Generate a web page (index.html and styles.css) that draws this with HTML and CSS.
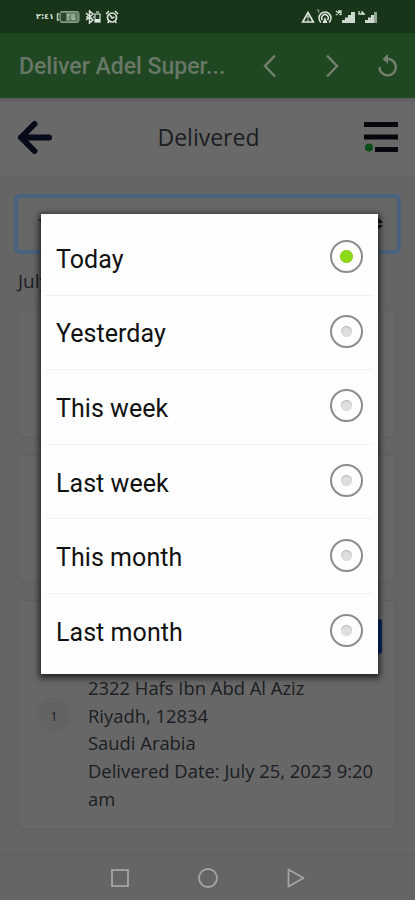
FILE: index.html
```html
<!DOCTYPE html>
<html lang="en">
<head>
<meta charset="utf-8">
<meta name="viewport" content="width=device-width, initial-scale=1">
<title>Delivered</title>
<link rel="stylesheet" href="styles.css">
</head>
<body>
<div class="status">
  <div class="status-left">
    <span class="clock">٢:٤١</span>
    <svg width="24" height="14" viewBox="0 0 24 14"><path d="M3 4H1.500V10H3" fill="none" stroke="#c3cec3" stroke-width="1.500"/><rect x="4" y="1.500" width="19" height="11" rx="2" fill="#668066" stroke="#8da18d"/><rect x="5" y="3" width="5" height="8" fill="#29482b"/><path d="M12 4v6M12 5h2M16 4v5h2M18 4v6" stroke="#c0cec0" fill="none"/></svg>
    <svg class="bt" width="17" height="14" viewBox="0 0 17 14"><path d="M1 3l7 7-3.500 3V1L8 4 1 10M1 7h2M8 7h1" fill="none" stroke="#dbe2db" stroke-width="1.500"/><path d="M10 4h5v8h-5zM11 2h3" fill="none" stroke="#aebfae" stroke-width="1.500"/><path d="M10 9h5v3h-5z" fill="#e1e7e1"/></svg>
    <svg class="alarm" width="14" height="14" viewBox="0 0 14 14"><circle cx="7" cy="7.500" r="4.500" fill="none" stroke="#dce3dc" stroke-width="1.700"/><path d="M1 4l3-3M13 4l-3-3M2.500 13l2-2M11.500 13l-2-2M5 5l2 3 2.500-1" fill="none" stroke="#dce3dc" stroke-width="1.500"/></svg>
  </div>
  <div class="status-right">
    <svg width="14" height="14" viewBox="0 0 14 14"><path d="M7 2.500L12.300 12H1.700z" fill="none" stroke="#dce3dc" stroke-width="1.700"/><path d="M7 5.500v3M7 9.500v1.500" stroke="#dce3dc" stroke-width="1.300"/></svg>
    <svg class="hotspot" width="18" height="16" viewBox="0 0 18 16"><path d="M5 13.500a6 6 0 1 1 8 0M6.500 11a3.300 3.300 0 1 1 5 0" fill="none" stroke="#dce3dc" stroke-width="1.500"/><path d="M9 8l2.500 6h-5z" fill="#dce3dc"/><path d="M1 1l2 0-.5 3" fill="none" stroke="#92a392"/></svg>
    <svg class="signal" width="22" height="15" viewBox="0 0 22 15"><path d="M1 2l5 4M1 6l5-4M3 2h3v4" fill="none" stroke="#cfd9cf" stroke-width="1.300"/><path d="M7 11h3v3H7zM10 8.500h3V14h-3zM13 6h3v8h-3zM16 3h4v11h-4z" fill="#cfd8cf"/></svg>
    <svg class="signal" width="22" height="15" viewBox="0 0 22 15"><path d="M1 2v3h3V2M5 3v3M4 5h3" fill="none" stroke="#cfd9cf" stroke-width="1.300"/><path d="M7 11h3v3H7zM10 8.500h3V14h-3zM13 6h3v8h-3z" fill="#cfd8cf"/><path d="M16 3h3v11h-3z" fill="#91a391"/></svg>
  </div>
</div>
<header class="appbar">
  <div class="app-title">Deliver Adel Super...</div>
  <svg class="nav-prev" width="18" height="26" viewBox="0 0 18 26"><path d="M14 2.500L4 13l10 10.500" fill="none" stroke="#74806f" stroke-width="2.500"/></svg>
  <svg class="nav-next" width="18" height="26" viewBox="0 0 18 26"><path d="M4 2.500L14 13 4 23.500" fill="none" stroke="#74806f" stroke-width="2.500"/></svg>
  <svg class="reload" width="22" height="26" viewBox="0 0 22 26"><path d="M8 6h3.500a8.200 8.200 0 1 1-9 8" fill="none" stroke="#74806f" stroke-width="2.400"/><path d="M11 1v10L5.500 6z" fill="#74806f"/></svg>
</header>
<div class="pagebar">
  <svg width="38" height="38" viewBox="0 0 38 38"><path d="M33 19.500H5M18.500 6L5 19.500 18.500 33" fill="none" stroke="#070a18" stroke-width="6" stroke-linecap="round" stroke-linejoin="round"/></svg>
  <h1>Delivered</h1>
  <svg width="36" height="34" viewBox="0 0 36 34"><path d="M1 4.500h34M1 17h34M12 29.500h23" stroke="#06070d" stroke-width="4.800"/><circle cx="6" cy="27.500" r="4" fill="#0b4f18"/></svg>
</div>
<main>
  <div class="select">
    <svg width="4" height="12" viewBox="0 0 4 12"><path d="M0 1h3v4z" fill="#303236"/></svg>
    <svg width="8" height="12" viewBox="0 0 8 12"><path d="M4 0l4 5H0zM4 11L8 7H0z" fill="#101216"/></svg>
  </div>
  <div class="date">July</div>
  <div class="card card-a"></div>
  <div class="card card-b"></div>
  <div class="card card-c">
    <div class="number">1</div>
    <div class="body">
      <div class="tagrow"><span class="tag"></span></div>
      <p>2322 Hafs Ibn Abd Al Aziz<br>Riyadh, 12834<br>Saudi Arabia<br>Delivered Date: July 25, 2023 9:20<br>am</p>
    </div>
  </div>
</main>
<nav class="sysnav">
  <svg width="20" height="20" viewBox="0 0 20 20"><rect x="2" y="2" width="16" height="16" fill="none" stroke="#a5a5a5" stroke-width="1.800"/></svg>
  <svg width="22" height="22" viewBox="0 0 22 22"><circle cx="11" cy="11" r="9" fill="none" stroke="#a5a5a5" stroke-width="1.800"/></svg>
  <svg width="20" height="22" viewBox="0 0 20 22"><path d="M2.500 2.500v17L17.500 11z" fill="none" stroke="#a5a5a5" stroke-width="1.800" stroke-linejoin="round"/></svg>
</nav>
<div class="dialog" role="listbox">
  <div class="option"><span>Today</span><i class="radio on"></i></div>
  <div class="option"><span>Yesterday</span><i class="radio"></i></div>
  <div class="option"><span>This week</span><i class="radio"></i></div>
  <div class="option"><span>Last week</span><i class="radio"></i></div>
  <div class="option"><span>This month</span><i class="radio"></i></div>
  <div class="option"><span>Last month</span><i class="radio"></i></div>
</div>
</body>
</html>
```
FILE: styles.css
```css
* { box-sizing: border-box; }
body {
  margin: 0;
  width: 415px;
  height: 900px;
  overflow: hidden;
  position: relative;
  display: flex;
  flex-direction: column;
  background: #656565;
  font-family: "Open Sans", "Noto Sans", sans-serif;
  color: #1b1d23;
}
svg { display: block; flex: none; }
.status {
  height: 33px;
  flex: none;
  display: flex;
  justify-content: space-between;
  padding: 0 35px 0 36px;
  background: #183519;
}
.status-left, .status-right { display: flex; align-items: center; height: 33px; }
.clock {
  width: 20px;
  font: bold 8px/14px "DejaVu Sans", sans-serif;
  letter-spacing: -0.400px;
  color: #dce3dc;
  white-space: nowrap;
  direction: ltr;
  unicode-bidi: bidi-override;
}
.bt { margin-left: 5px; }
.alarm { margin-left: 3px; }
.hotspot { margin-left: 1px; }
.signal { margin-left: 1px; }
.appbar {
  height: 65px;
  flex: none;
  display: flex;
  align-items: center;
  padding: 2px 0 0 19px;
  background: #1f4822;
  border-bottom: 1px solid #1f5023;
}
.app-title {
  width: 242px;
  padding-top: 2px;
  font: 500 23px/30px Roboto, sans-serif;
  color: #687768;
  white-space: nowrap;
}
.nav-next { margin-left: 44px; }
.reload { margin-left: 36px; }
.pagebar {
  height: 79px;
  flex: none;
  display: flex;
  align-items: center;
  justify-content: space-between;
  padding: 0 16px;
  background: linear-gradient(#5b5b5b, #696969 5px);
  border-bottom: 1px solid #646464;
}
h1 { margin: 0; font-size: 23px; font-weight: 400; line-height: 32px; }
main { flex: none; height: 678px; padding: 17px 14px 0; }
.select {
  height: 60px;
  display: flex;
  justify-content: space-between;
  align-items: center;
  padding: 0 14px 0 20px;
  border: 4px solid #4b627f;
  border-radius: 5px;
  background: #656765;
}
.date { height: 56px; padding: 12px 4px; font-size: 19px; line-height: 30px; }
.card {
  margin: 0 4px;
  border: 1px solid #606060;
  border-radius: 3px;
  background: #676767;
}
.card-a { height: 128px; }
.card-b { height: 128px; margin-top: 17px; }
.card-c { height: 230px; margin-top: 17px; display: flex; align-items: center; }
.number {
  width: 34px;
  height: 34px;
  margin-left: 18px;
  border-radius: 50%;
  background: #636363;
  font-size: 13px;
  line-height: 37px;
  text-align: center;
}
.body { width: 307px; margin-left: 17px; align-self: flex-start; }
.tagrow { display: flex; justify-content: flex-end; height: 73px; padding: 18px 13px 0 0; }
.tag { width: 60px; height: 35px; border-radius: 3px; background: #002763; }
.body p { margin: 0; font-size: 18.400px; line-height: 27.700px; white-space: nowrap; }
.sysnav {
  height: 45px;
  flex: none;
  display: flex;
  align-items: center;
  justify-content: space-between;
  padding: 0 109px 0 110px;
  background: #656565;
  border-top: 1px solid #606060;
}
.dialog {
  position: absolute;
  left: 41px;
  top: 214px;
  width: 337px;
  height: 460px;
  padding: 7px 5px 5px;
  background: #fefefe;
  box-shadow: 0 2px 6px 2px rgba(0, 0, 0, .65);
}
.option {
  height: 74.600px;
  display: flex;
  align-items: center;
  justify-content: space-between;
  padding: 4px 10px 0;
  border-bottom: 1px solid #f1f1f1;
  font: 25px/32px Roboto, sans-serif;
  letter-spacing: .05px;
  color: #111111;
}
.option:last-child { border-bottom: 0; }
.radio {
  width: 33px;
  height: 33px;
  margin-top: -6px;
  display: flex;
  align-items: center;
  justify-content: center;
  border: 2px solid #8c8c8c;
  border-radius: 50%;
}
.radio::before {
  content: "";
  width: 11px;
  height: 11px;
  border-radius: 50%;
  background: #dedede;
  box-shadow: inset 0 1px 1px #b4b4b4;
}
.radio.on::before {
  width: 13px;
  height: 13px;
  background: #8edb1b;
  box-shadow: inset 0 0 1px #65a510;
}
```
